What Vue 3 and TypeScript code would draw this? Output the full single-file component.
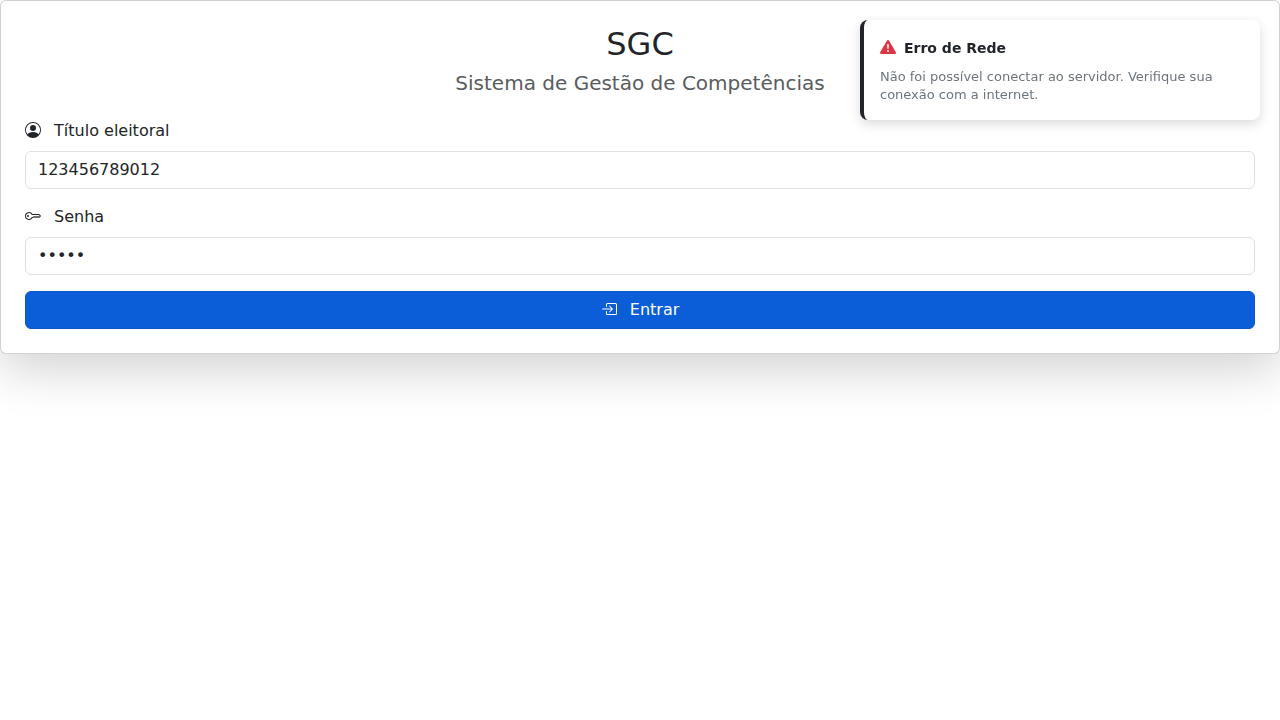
<script setup lang="ts">
import { ref } from 'vue'

const titulo = ref<string>('123456789012')
const senha = ref<string>('senha')
const erro = {
  titulo: 'Erro de Rede',
  mensagem: 'Não foi possível conectar ao servidor. Verifique sua conexão com a internet.',
}
</script>

<template>
  <div class="page">
    <main class="card">
      <h1 class="brand">SGC</h1>
      <p class="subtitle">Sistema de Gestão de Competências</p>
      <form @submit.prevent>
        <div class="field">
          <label for="titulo">
            <svg class="icon" viewBox="0 0 16 16" aria-hidden="true">
              <path d="M11 6a3 3 0 1 1-6 0 3 3 0 0 1 6 0" />
              <path fill-rule="evenodd" d="M0 8a8 8 0 1 1 16 0A8 8 0 0 1 0 8m8-7a7 7 0 0 0-5.468 11.37C3.242 11.226 4.805 10 8 10s4.757 1.225 5.468 2.37A7 7 0 0 0 8 1" />
            </svg>
            Título eleitoral
          </label>
          <input id="titulo" v-model="titulo" type="text" autocomplete="username" />
        </div>
        <div class="field">
          <label for="senha">
            <svg class="icon" viewBox="0 0 16 16" aria-hidden="true">
              <path d="M0 8a4 4 0 0 1 7.465-2H14a.5.5 0 0 1 .354.146l1.5 1.5a.5.5 0 0 1 0 .708l-1.5 1.5a.5.5 0 0 1-.708 0L13 9.207l-.646.647a.5.5 0 0 1-.708 0L11 9.207l-.646.647a.5.5 0 0 1-.708 0L9 9.207l-.646.647A.5.5 0 0 1 8 10h-.535A4 4 0 0 1 0 8m4-3a3 3 0 1 0 2.712 4.285A.5.5 0 0 1 7.163 9h.63l.853-.854a.5.5 0 0 1 .708 0l.646.647.646-.647a.5.5 0 0 1 .708 0l.646.647.646-.647a.5.5 0 0 1 .708 0l.646.647.793-.793-1-1h-6.63a.5.5 0 0 1-.451-.285A3 3 0 0 0 4 5" />
              <path d="M4 8a1 1 0 1 1-2 0 1 1 0 0 1 2 0" />
            </svg>
            Senha
          </label>
          <input id="senha" v-model="senha" type="password" autocomplete="current-password" />
        </div>
        <button class="submit" type="submit">
          <svg class="icon" viewBox="0 0 16 16" aria-hidden="true">
            <path fill-rule="evenodd" d="M6 3.5a.5.5 0 0 1 .5-.5h8a.5.5 0 0 1 .5.5v9a.5.5 0 0 1-.5.5h-8a.5.5 0 0 1-.5-.5v-2a.5.5 0 0 0-1 0v2A1.5 1.5 0 0 0 6.5 14h8a1.5 1.5 0 0 0 1.5-1.5v-9A1.5 1.5 0 0 0 14.5 2h-8A1.5 1.5 0 0 0 5 3.5v2a.5.5 0 0 0 1 0z" />
            <path fill-rule="evenodd" d="M11.854 8.354a.5.5 0 0 0 0-.708l-3-3a.5.5 0 1 0-.708.708L10.293 7.5H1.5a.5.5 0 0 0 0 1h8.793l-2.147 2.146a.5.5 0 0 0 .708.708z" />
          </svg>
          Entrar
        </button>
      </form>
    </main>

    <aside class="toast" role="alert">
      <div class="toast-head">
        <svg class="toast-icon" viewBox="0 0 16 16" aria-hidden="true">
          <path d="M8.982 1.566a1.13 1.13 0 0 0-1.96 0L.165 13.233c-.457.778.091 1.767.98 1.767h13.713c.889 0 1.438-.99.98-1.767zM8 5c.535 0 .954.462.9.995l-.35 3.507a.552.552 0 0 1-1.1 0L7.1 5.995A.905.905 0 0 1 8 5m.002 6a1 1 0 1 1 0 2 1 1 0 0 1 0-2" />
        </svg>
        <strong>{{ erro.titulo }}</strong>
      </div>
      <p>{{ erro.mensagem }}</p>
    </aside>
  </div>
</template>

<style>
body {
  margin: 0;
  background: #fff;
}
</style>

<style scoped>
.page {
  min-height: 100vh;
  font-family: "DejaVu Sans", sans-serif;
  font-size: 16px;
  line-height: 24px;
  color: #212529;
}
.card {
  padding: 24px;
  border: 1px solid rgba(0, 0, 0, 0.175);
  border-radius: 6px;
  background: #fff;
  box-shadow: 0 16px 48px rgba(0, 0, 0, 0.175);
}
.brand {
  margin: 0 0 8px;
  font-size: 32px;
  line-height: 38px;
  font-weight: 400;
  text-align: center;
}
.subtitle {
  margin: 0 0 24px;
  font-size: 20px;
  line-height: 24px;
  text-align: center;
  color: #595c5f;
}
.icon {
  width: 16px;
  height: 16px;
  margin-right: 8px;
  fill: currentColor;
  vertical-align: -2px;
}
.field {
  margin-bottom: 16px;
}
.field label {
  display: block;
  width: fit-content;
  margin-bottom: 8px;
}
.field input {
  display: block;
  box-sizing: border-box;
  width: 100%;
  padding: 6px 12px;
  border: 1px solid #dee2e6;
  border-radius: 6px;
  background: #fff;
  color: #212529;
  font: inherit;
  line-height: 24px;
}
.submit {
  display: block;
  width: 100%;
  padding: 6px 12px;
  border: 1px solid #0a58ca;
  border-radius: 6px;
  background: #0b5ed7;
  color: #fff;
  font: inherit;
  text-align: center;
  cursor: pointer;
}
.toast {
  position: fixed;
  top: 20px;
  right: 20px;
  box-sizing: border-box;
  width: 400px;
  max-width: calc(100% - 40px);
  padding: 16px;
  border-left: 4px solid #212529;
  border-radius: 8px;
  background: #fff;
  box-shadow: 0 4px 12px rgba(0, 0, 0, 0.15);
  will-change: transform;
}
.toast-head {
  display: flex;
  align-items: center;
  gap: 8px;
  margin-bottom: 8px;
  font-size: 14px;
}
.toast-icon {
  flex: none;
  width: 16px;
  height: 16px;
  margin-bottom: 2px;
  fill: #dc3545;
}
.toast p {
  margin: 0;
  font-size: 13px;
  line-height: 18px;
  color: #6c757d;
}
</style>
